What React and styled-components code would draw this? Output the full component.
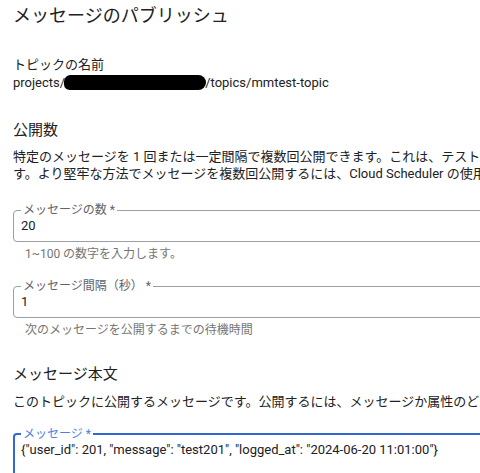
import React from 'react';
import styled, { createGlobalStyle } from 'styled-components';

const GlobalStyle = createGlobalStyle`
  html, body {
    margin: 0;
    padding: 0;
    background: #fff;
    overflow: hidden;
  }
  body {
    font-family: Roboto, "Noto Sans CJK JP", sans-serif;
    color: #202124;
  }
`;

const Page = styled.div`
  width: 620px;
  padding: 4px 0 0 13px;
  box-sizing: border-box;
`;

const Title = styled.h1`
  margin: 0;
  font-size: 18px;
  line-height: 24px;
  font-weight: 400;
  color: #202124;
`;

const Section = styled.section`
  margin-top: ${p => p.$gap || 0}px;
`;

const Label = styled.div`
  font-size: 13px;
  line-height: 18px;
`;

const Value = styled.div`
  font-size: 13px;
  line-height: 18px;
  white-space: nowrap;
`;

const Redacted = styled.span`
  display: inline-block;
  width: 142px;
  height: 15px;
  margin: 0 -1px;
  vertical-align: -3px;
  background: #000;
  border-radius: 7px 8px 8px 6px;
`;

const Heading = styled.h2`
  margin: 0;
  font-size: 15px;
  line-height: 20px;
  font-weight: 400;
`;

const Text = styled.p`
  margin: ${p => p.$top || 0}px 0 0;
  font-size: 13px;
  line-height: 17px;
  white-space: nowrap;
`;

const Field = styled.fieldset`
  margin: ${p => p.$top || 0}px 0 0;
  padding: 1px 7px ${p => (p.$active ? 30 : 7)}px;
  border: 1px solid #9aa0a6;
  border-radius: 4px;
  min-width: 0;
  ${p =>
    p.$active &&
    `
    border: 2px solid #3367d6;
    padding-left: 6px;
  `}
`;

const Legend = styled.legend`
  padding: 0 2px;
  font-size: 12px;
  line-height: 14px;
  color: ${p => (p.$active ? '#4a7fe3' : '#5f6368')};
`;

const Input = styled.div`
  font-size: 13px;
  line-height: 16px;
  color: #202124;
  white-space: nowrap;
`;

const Hint = styled.div`
  margin-top: 4px;
  padding-left: 12px;
  font-size: 12px;
  line-height: 16px;
  color: #757575;
`;

export default function App() {
  return (
    <>
      <GlobalStyle />
      <Page>
        <Title>メッセージのパブリッシュ</Title>

        <Section $gap={28}>
          <Label>トピックの名前</Label>
          <Value>
            projects/<Redacted />/topics/mmtest-topic
          </Value>
        </Section>

        <Section $gap={28}>
          <Heading>公開数</Heading>
          <Text $top={8}>
            特定のメッセージを 1 回または一定間隔で複数回公開できます。これは、テストに役立ちます。
          </Text>
          <Text>
            す。より堅牢な方法でメッセージを複数回公開するには、Cloud Scheduler の使用をご検討ください。
          </Text>

          <Field $top={21}>
            <Legend>メッセージの数 *</Legend>
            <Input>20</Input>
          </Field>
          <Hint>1~100 の数字を入力します。</Hint>

          <Field $top={17}>
            <Legend>メッセージ間隔（秒） *</Legend>
            <Input>1</Input>
          </Field>
          <Hint>次のメッセージを公開するまでの待機時間</Hint>
        </Section>

        <Section $gap={26}>
          <Heading>メッセージ本文</Heading>
          <Text $top={9}>
            このトピックに公開するメッセージです。公開するには、メッセージか属性のどちらかまたは両方を指定する必要があります。
          </Text>

          <Field $top={17} $active>
            <Legend $active>メッセージ *</Legend>
            <Input>{'{"user_id": 201, "message": "test201", "logged_at": "2024-06-20 11:01:00"}'}</Input>
          </Field>
        </Section>
      </Page>
    </>
  );
}
